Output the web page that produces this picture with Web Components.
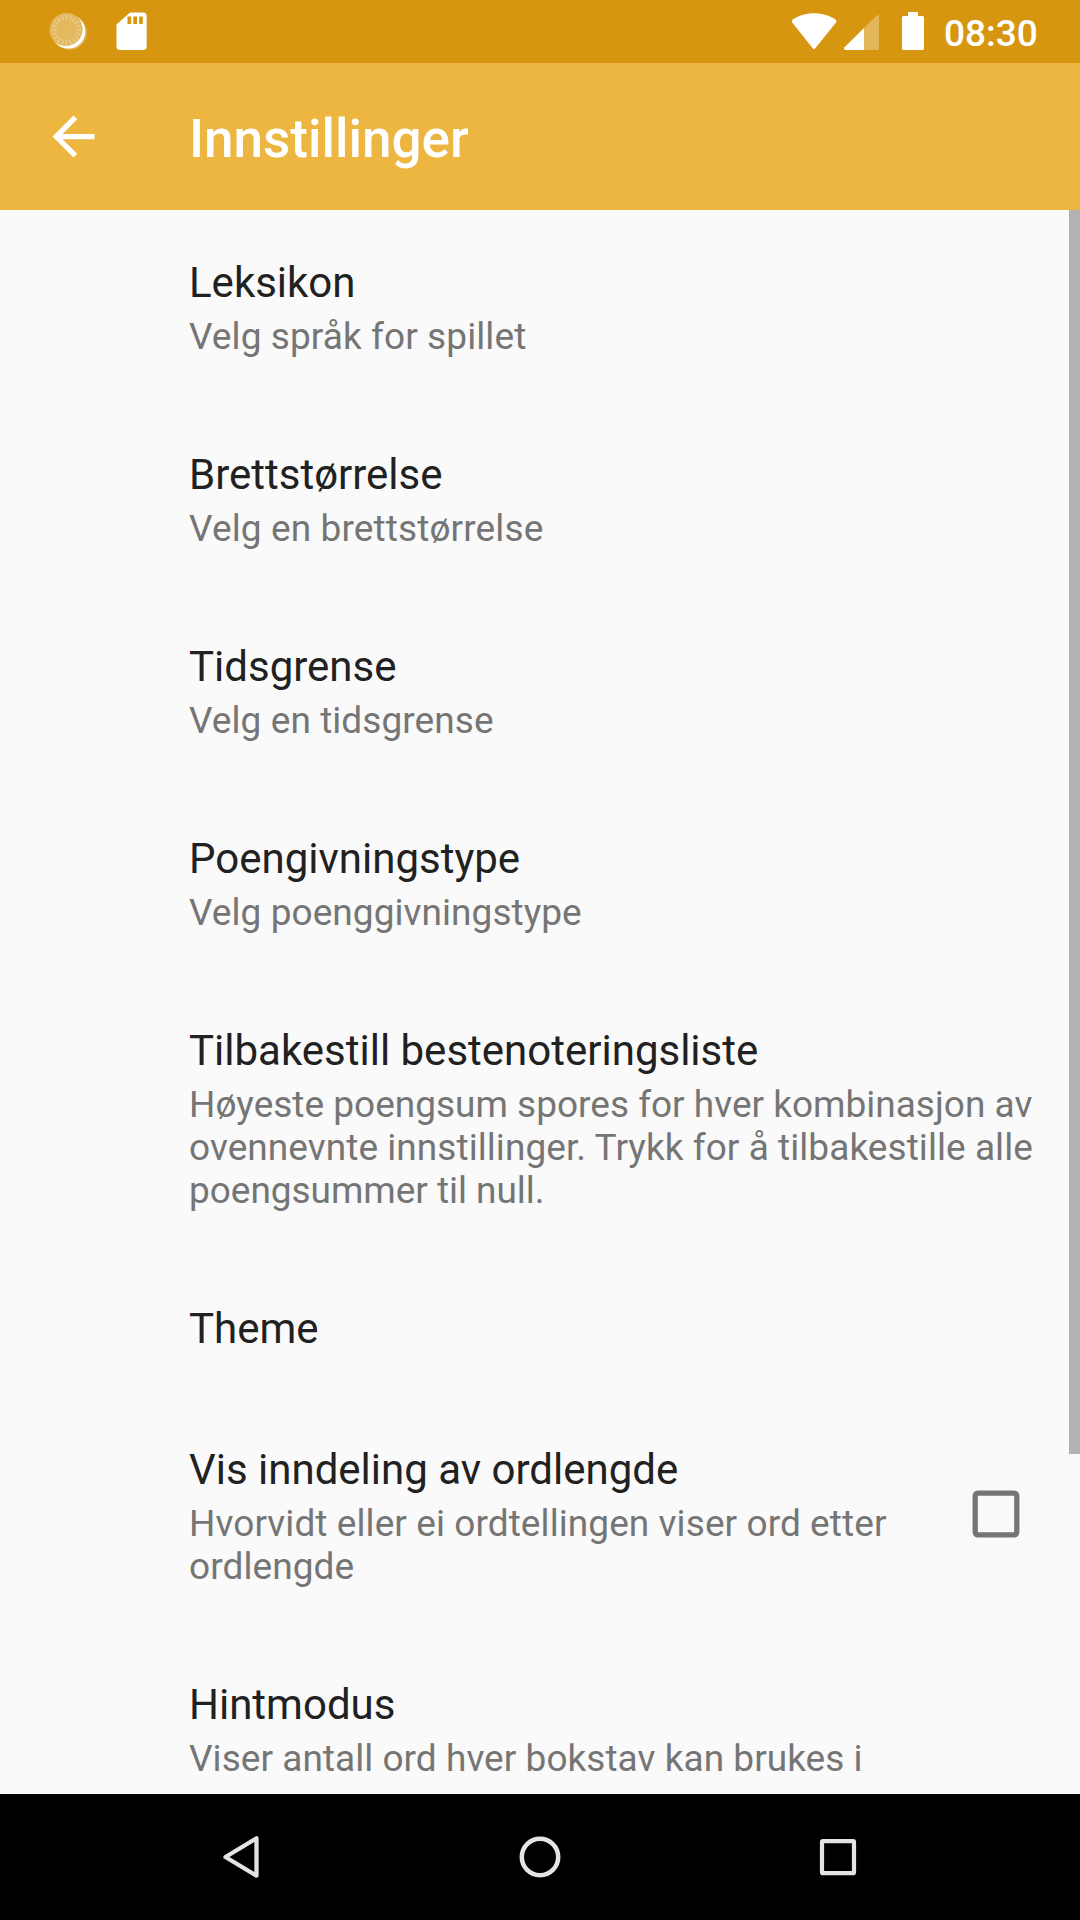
<!DOCTYPE html>
<html lang="nb">
<head>
<meta charset="utf-8">
<title>Innstillinger</title>
<style>
html,body{margin:0;padding:0}
body{width:1080px;height:1920px;overflow:hidden;background:#fafafa;font-family:Roboto,"Noto Sans",sans-serif}
</style>
</head>
<body>
<settings-screen>
  <status-bar slot="status" time="08:30"></status-bar>
  <app-bar slot="bar">Innstillinger</app-bar>
  <pref-row>Leksikon<span slot="summary" style="letter-spacing:.09px">Velg språk for spillet</span></pref-row>
  <pref-row>Brettstørrelse<span slot="summary" style="letter-spacing:.13px">Velg en brettstørrelse</span></pref-row>
  <pref-row>Tidsgrense<span slot="summary" style="letter-spacing:.07px">Velg en tidsgrense</span></pref-row>
  <pref-row>Poengivningstype<span slot="summary" style="letter-spacing:.06px">Velg poenggivningstype</span></pref-row>
  <pref-row>Tilbakestill bestenoteringsliste<span slot="summary">Høyeste poengsum spores for hver kombinasjon av<br><span style="letter-spacing:.06px">ovennevnte innstillinger. Trykk for å tilbakestille alle</span><br><span style="letter-spacing:-.04px">poengsummer til null.</span></span></pref-row>
  <pref-row class="single">Theme</pref-row>
  <pref-row>Vis inndeling av ordlengde<span slot="summary" style="letter-spacing:.08px">Hvorvidt eller ei ordtellingen viser ord etter<br>ordlengde</span><check-box slot="widget"></check-box></pref-row>
  <pref-row>Hintmodus<span slot="summary" style="letter-spacing:.04px">Viser antall ord hver bokstav kan brukes i</span></pref-row>
  <nav-bar slot="nav"></nav-bar>
</settings-screen>
<script>
const define = (name, html) => customElements.define(name, class extends HTMLElement {
  constructor() {
    super();
    const t = document.createElement('template');
    t.innerHTML = html;
    this.attachShadow({mode: 'open'}).append(t.content.cloneNode(true));
    const time = this.shadowRoot.querySelector('time');
    if (time) time.textContent = this.getAttribute('time');
  }
});

define('settings-screen', `<style>
:host{display:flex;flex-direction:column;width:1080px;height:1920px;background:#fafafa}
main{flex:1;min-height:0;display:flex;overflow:hidden}
.list{flex:1;min-width:0;display:flex;flex-direction:column}
.thumb{width:11px;height:1244px;background:#b2b2b2}
</style>
<slot name="status"></slot><slot name="bar"></slot>
<main><div class="list"><slot></slot></div><div class="thumb"></div></main>
<slot name="nav"></slot>`);

let rays = '';
for (let i = 0; i < 20; i++) rays += `<path d="M66.600 14.800v5" transform="rotate(${i * 18} 66.600 30)"/>`;
define('status-bar', `<style>
:host{display:flex;flex:none;height:63px;background:#d7960f;color:#fff}
svg{display:block;flex:none}
.gap{flex:1}
time{width:136px;font:500 37px/43px Roboto,sans-serif;padding-top:12px;box-sizing:border-box}
</style>
<svg width="170" height="63" viewBox="0 0 170 63">
<mask id="m"><rect width="170" height="63" fill="#fff"/><circle cx="65.800" cy="29.200" r="16.900" fill="#000"/></mask>
<circle cx="69.600" cy="32.500" r="17.300" fill="#fff" fill-opacity=".3" mask="url(#m)"/>
<circle cx="68.300" cy="31.600" r="17" fill="#fff" mask="url(#m)"/>
<circle cx="66.600" cy="30" r="17" fill="#fff" fill-opacity=".33"/>
<g stroke="#fff" stroke-opacity=".25" stroke-width="1.600">${rays}</g>
<path fill="#fff" fill-rule="evenodd" d="M130 12.500H143.200a3.500 3.500 0 0 1 3.500 3.500V46.500a3.500 3.500 0 0 1-3.500 3.500H120a3.500 3.500 0 0 1-3.500-3.500V24.500ZM127.500 16.500V24H131.200V16.500ZM133.300 16.500V24H137V16.500ZM139.200 16.500V24H142.800V16.500Z"/>
</svg>
<div class="gap"></div>
<svg width="159" height="63" viewBox="785 0 159 63" fill="#fff">
<path d="M792.200 22.500Q791 21 792.500 19.800C804 11 824 11 835.700 19.800Q837.200 21 836 22.500L815.500 48Q814 50 812.500 48Z"/>
<path fill-opacity=".32" d="M864 28L876.800 15.700Q879 14 879 16.500V48.500Q879 50 877.500 50H864Z"/>
<path d="M864 28V50H845.500Q843 49.500 844.500 47.300Z"/>
<path d="M908 12H918V16H922.500Q924 16 924 17.500V48.500Q924 50 922.500 50H903.500Q902 50 902 48.500V17.500Q902 16 903.500 16H908Z"/>
</svg>
<time></time>`);

define('app-bar', `<style>
:host{display:flex;flex:none;align-items:center;height:147px;box-sizing:border-box;padding-left:42px;gap:84px;background:#edb641;color:#fff;font-size:53px;line-height:62px;font-weight:500}
svg{display:block}
span{padding-top:5px}
</style>
<svg width="63" height="63" viewBox="0 0 24 24" fill="#fff"><path d="M20 11H7.830l5.590-5.590L12 4l-8 8 8 8 1.410-1.410L7.830 13H20v-2z"/></svg>
<span><slot></slot></span>`);

define('pref-row', `<style>
:host{display:flex;flex:none;align-items:center;padding-left:189px}
.text{flex:1;min-width:0;padding:48px 0 44px;white-space:nowrap}
.title{font-size:42px;line-height:49px;color:#212121}
.summary{font-size:37px;line-height:43px;color:#757575;padding-top:8px}
:host(.single) .summary{display:none}
</style>
<div class="text"><div class="title"><slot></slot></div><div class="summary"><slot name="summary"></slot></div></div>
<slot name="widget"></slot>`);

define('check-box', `<style>
:host{display:block;flex:none;width:97px;padding-bottom:2px}
svg{display:block}
</style>
<svg width="48" height="48" viewBox="0 0 48 48"><rect x="3.200" y="3.200" width="41.600" height="41.600" rx="2.600" fill="none" stroke="#757575" stroke-width="5.300"/></svg>`);

define('nav-bar', `<style>
:host{display:flex;flex:none;height:126px;background:#000;align-items:center;justify-content:center}
div{width:298px;display:flex;justify-content:center}
svg{display:block}
</style>
<div><svg width="50" height="50" viewBox="217 1832 50 50"><path d="M225.500 1857L256.500 1838.300V1875.700Z" fill="none" stroke="#e4e4e4" stroke-width="4.300" stroke-linejoin="round"/></svg></div>
<div><svg width="50" height="50" viewBox="515 1832 50 50"><circle cx="540" cy="1857" r="18.200" fill="none" stroke="#e4e4e4" stroke-width="4.500"/></svg></div>
<div><svg width="50" height="50" viewBox="813 1832 50 50"><rect x="822" y="1841.200" width="32" height="32" rx="1" fill="none" stroke="#e4e4e4" stroke-width="4.200"/></svg></div>`);
</script>
</body>
</html>
